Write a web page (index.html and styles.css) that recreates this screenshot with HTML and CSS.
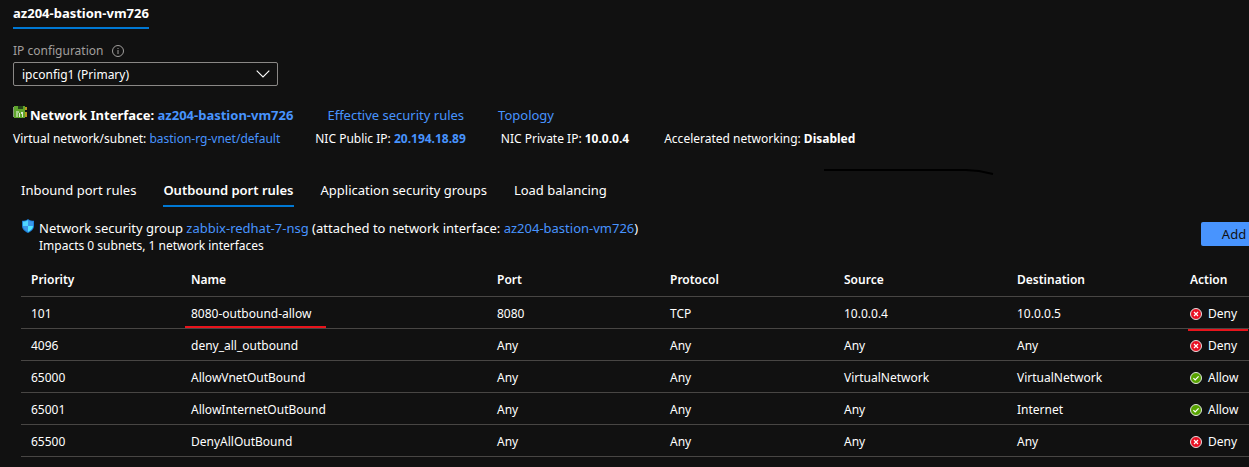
FILE: index.html
```html
<!DOCTYPE html>
<html lang="en">
<head>
<meta charset="utf-8">
<title>Networking - az204-bastion-vm726</title>
<link rel="stylesheet" href="styles.css">
</head>
<body>
<svg class="sprites" width="0" height="0" aria-hidden="true">
  <symbol id="deny" viewBox="0 0 12 12">
    <circle cx="6" cy="6" r="5.5" fill="#e81123" stroke="#e6e0e0"/>
    <path d="M4 4l4 4M8 4l-4 4" stroke="#fff" stroke-width="1.2" fill="none"/>
  </symbol>
  <symbol id="allow" viewBox="0 0 12 12">
    <circle cx="6" cy="6" r="5.5" fill="#57a300" stroke="#e0e6dc"/>
    <path d="M3.4 6.2l1.8 1.8L8.6 4.4" stroke="#fff" stroke-width="1.2" fill="none"/>
  </symbol>
</svg>
<main class="page">
  <div class="nic-tabs"><button class="nic-tab">az204-bastion-vm726</button></div>

  <div class="field">
    <div class="field-label">
      <label for="ipconfig">IP configuration</label>
      <svg class="info" viewBox="0 0 12 12" width="12" height="12" aria-hidden="true"><circle cx="6" cy="6" r="5.5" fill="none" stroke="#a19f9d"/><path d="M6 5v4M6 3v1" stroke="#a19f9d"/></svg>
    </div>
    <div class="select-box">
      <select id="ipconfig"><option>ipconfig1 (Primary)</option></select>
      <svg class="chevron" viewBox="0 0 14 8" width="14" height="8" aria-hidden="true"><path d="M.7.7L7 7 13.3.7" fill="none" stroke="#fff" stroke-width="1.1"/></svg>
    </div>
  </div>

  <div class="nic-title">
    <div class="nic-name">
      <svg viewBox="0 0 14 13" width="14" height="13" aria-hidden="true"><path d="M1 0h11v12H1z" fill="#5fa52c"/><path d="M0 1h1v10H0z" fill="#8a9a80"/><path d="M12 1h2v3h-2zM12 6h2v5h-2z" fill="#b89a1c"/><path d="M5 0h5v3H5z" fill="#24451a"/><path d="M3 5h3v2H5v4H3z" fill="#a5cf88"/><path d="M6 7h1v4H6zM8 6h2v5H9V8H8z" fill="#dcebd0"/></svg>
      <span>Network Interface: <a href="#">az204-bastion-vm726</a></span>
    </div>
    <a href="#">Effective security rules</a>
    <a href="#">Topology</a>
  </div>
  <div class="facts">
    <span>Virtual network/subnet: <a href="#">bastion-rg-vnet/default</a></span>
    <span>NIC Public IP: <a class="strong" href="#">20.194.18.89</a></span>
    <span>NIC Private IP: <b>10.0.0.4</b></span>
    <span>Accelerated networking: <b>Disabled</b></span>
  </div>

  <section class="rules">
    <nav class="rule-tabs">
      <button>Inbound port rules</button>
      <button class="active">Outbound port rules</button>
      <button>Application security groups</button>
      <button>Load balancing</button>
      <svg class="stroke" viewBox="0 0 170 6" width="170" height="6" aria-hidden="true"><path d="M0 1h142l13 1 14 3" fill="none" stroke="#000" stroke-width="2"/></svg>
    </nav>
    <div class="group">
      <svg class="shield" viewBox="0 0 12 14" width="12" height="14" aria-hidden="true"><path d="M6 0c2 1.500 4 1.800 6 1.800V7c0 3.500-3 5.500-6 7-3-1.500-6-3.500-6-7V1.800C2 1.800 4 1.500 6 0z" fill="#1b7fd8"/><path d="M6 1v6H1V2.600C3 2.600 4.600 2 6 1z" fill="#50d6ff"/><path d="M6 1v6h5V2.600C9 2.600 7.400 2 6 1z" fill="#3a96e8"/><path d="M6 7H1c0 2.800 2.400 4.600 5 5.900z" fill="#3a96e8"/><path d="M6 7h5c0 2.800-2.400 4.600-5 5.900z" fill="#50e6ff"/></svg>
      <div class="group-text">
        <p>Network security group <a href="#">zabbix-redhat-7-nsg</a> (attached to network interface: <a href="#">az204-bastion-vm726</a>)</p>
        <p class="impact">Impacts 0 subnets, 1 network interfaces</p>
      </div>
      <button class="add">Add</button>
    </div>
    <table>
      <colgroup><col class="c-priority"><col class="c-name"><col class="c-mid"><col class="c-wide"><col class="c-mid"><col class="c-mid"><col></colgroup>
      <thead><tr><th>Priority</th><th>Name</th><th>Port</th><th>Protocol</th><th>Source</th><th>Destination</th><th>Action</th></tr></thead>
      <tbody>
        <tr><td>101</td><td class="marked">8080-outbound-allow</td><td>8080</td><td>TCP</td><td>10.0.0.4</td><td>10.0.0.5</td><td class="marked low"><span class="action"><svg><use href="#deny"/></svg>Deny</span></td></tr>
        <tr><td>4096</td><td>deny_all_outbound</td><td>Any</td><td>Any</td><td>Any</td><td>Any</td><td><span class="action"><svg><use href="#deny"/></svg>Deny</span></td></tr>
        <tr><td>65000</td><td>AllowVnetOutBound</td><td>Any</td><td>Any</td><td>VirtualNetwork</td><td>VirtualNetwork</td><td><span class="action"><svg><use href="#allow"/></svg>Allow</span></td></tr>
        <tr><td>65001</td><td>AllowInternetOutBound</td><td>Any</td><td>Any</td><td>Any</td><td>Internet</td><td><span class="action"><svg><use href="#allow"/></svg>Allow</span></td></tr>
        <tr><td>65500</td><td>DenyAllOutBound</td><td>Any</td><td>Any</td><td>Any</td><td>Any</td><td><span class="action"><svg><use href="#deny"/></svg>Deny</span></td></tr>
      </tbody>
    </table>
  </section>
</main>
</body>
</html>
```
FILE: styles.css
```css
* { box-sizing: border-box; }
body {
  margin: 0;
  background: #111;
  color: #fff;
  font: 12px/16px "Segoe UI", "Noto Sans", "Open Sans", sans-serif;
  overflow: hidden;
}
.sprites { position: absolute; }
button, select { font: inherit; color: inherit; background: none; border: 0; padding: 0; }
a { color: #4894fe; text-decoration: none; }
p { margin: 0; }
.page { padding: 3px 0 0 13px; white-space: nowrap; }

.nic-tab {
  height: 26px;
  padding-bottom: 5px;
  font-size: 13px;
  font-weight: 700;
  border-bottom: 2px solid #0078d4;
}
.nic-tabs { display: flex; }

.field { margin-top: 12px; }
.field-label { display: flex; align-items: center; gap: 9px; height: 20px; color: #a19f9d; }
.select-box { position: relative; width: 265px; margin-top: 1px; }
select {
  appearance: none;
  display: block;
  width: 100%;
  height: 24px;
  padding: 2px 0 0 8px;
  border: 1px solid #8a8886;
  border-radius: 2px;
}
.chevron { position: absolute; right: 8px; top: 8px; pointer-events: none; }

.nic-title { display: flex; gap: 34px; margin-top: 19px; font-size: 13px; line-height: 20px; }
.nic-name { display: flex; gap: 3px; font-weight: 700; }
.nic-name svg { margin-top: 1px; }
.facts { display: flex; gap: 35px; margin-top: 6px; }
.strong, b { font-weight: 700; }

.rules { padding-left: 8px; margin-top: 32px; }
.rule-tabs { position: relative; display: flex; gap: 27px; font-size: 13px; }
.rule-tabs button { height: 28px; padding-bottom: 5px; border-bottom: 2px solid transparent; }
.rule-tabs .active { font-weight: 600; border-color: #0078d4; }
.stroke { position: absolute; left: 803px; top: -10px; }

.group { display: flex; margin-top: 12px; }
.shield { margin: 0 5px 0 1px; }
.group-text { flex: 1; font-size: 13px; line-height: 18px; }
.group-text .impact { font-size: 12px; }
.add {
  width: 66px;
  height: 24px;
  margin: 3px -18px 0 0;
  border-radius: 2px;
  background: #4894fe;
  color: #111;
  font-size: 13px;
}

table { width: 100%; margin-top: 9px; table-layout: fixed; border-collapse: collapse; }
.c-priority { width: 160px; }
.c-name { width: 306px; }
.c-mid { width: 173px; }
.c-wide { width: 174px; }
th, td { position: relative; height: 32px; padding: 0 0 0 10px; text-align: left; border-bottom: 1px solid #484644; }
th { font-weight: 600; }
td { padding-top: 4px; }
.action { display: flex; align-items: center; gap: 6px; }
.action svg { width: 12px; height: 12px; }
.marked::after {
  content: "";
  position: absolute;
  left: 4px;
  bottom: 0;
  width: 141px;
  height: 2px;
  background: #e8141c;
}
.low::after { left: 8px; bottom: -3px; width: 60px; }
```
